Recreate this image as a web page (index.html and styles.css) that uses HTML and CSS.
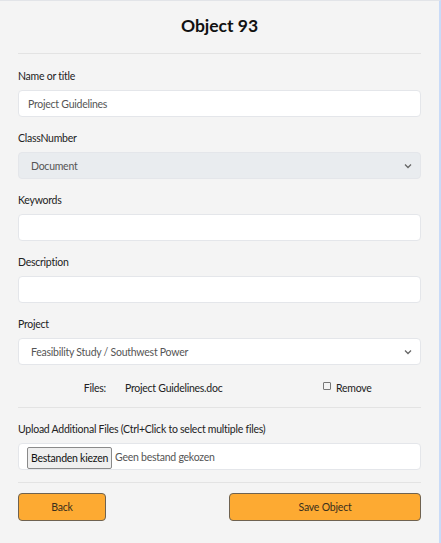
FILE: index.html
```html
<!DOCTYPE html>
<html>
<head>
<meta charset="utf-8">
<link rel="stylesheet" href="styles.css">
</head>
<body>
<div class="page">
  <h1 class="title">Object 93</h1>
  <hr class="rule">
  <div class="field">
    <label class="label">Name or title</label>
    <div class="control">Project Guidelines</div>
  </div>
  <div class="field">
    <label class="label">ClassNumber</label>
    <div class="control select disabled"><span>Document</span><svg class="chev" width="8" height="6" viewBox="0 0 8 6"><path d="M1 1.5 L4 4.5 L7 1.5" fill="none" stroke="#666" stroke-width="1.3"/></svg></div>
  </div>
  <div class="field">
    <label class="label">Keywords</label>
    <div class="control"></div>
  </div>
  <div class="field">
    <label class="label">Description</label>
    <div class="control"></div>
  </div>
  <div class="field">
    <label class="label">Project</label>
    <div class="control select"><span>Feasibility Study / Southwest Power</span><svg class="chev" width="8" height="6" viewBox="0 0 8 6"><path d="M1 1.5 L4 4.5 L7 1.5" fill="none" stroke="#666" stroke-width="1.3"/></svg></div>
  </div>
  <div class="files">
    <span class="files-label">Files:</span>
    <span class="files-name">Project Guidelines.doc</span>
    <span class="files-remove"><span class="check"></span>Remove</span>
  </div>
  <hr class="rule rule-files">
  <div class="field">
    <label class="label">Upload Additional Files (Ctrl+Click to select multiple files)</label>
    <div class="control file"><span class="file-btn">Bestanden kiezen</span><span class="file-none">Geen bestand gekozen</span></div>
  </div>
  <hr class="rule rule-last">
  <div class="actions">
    <button class="btn btn-back">Back</button>
    <button class="btn btn-save">Save Object</button>
  </div>
</div>
</body>
</html>
```

FILE: styles.css
```css
html, body {
  margin: 0;
  padding: 0;
}
body {
  width: 441px;
  height: 543px;
  box-sizing: border-box;
  background: #f4f4f4;
  border-top: 1px solid #e2e4e8;
  border-right: 2px solid #c9dbf8;
  font-family: "Lato", "Noto Sans", sans-serif;
  font-size: 10.5px;
  letter-spacing: -0.25px;
  color: #222;
  overflow: hidden;
}
.page {
  padding: 0 18px 0 18px;
}
.title {
  margin: 11px 0 0 0;
  font-size: 17.5px;
  line-height: 28px;
  font-weight: 700;
  letter-spacing: 0;
  text-align: center;
  color: #111;
}
.rule {
  border: 0;
  border-top: 1px solid #e3e3e3;
  margin: 13px 0 13px 0;
}
.field {
  margin-bottom: 12px;
}
.label {
  display: block;
  line-height: 18px;
  margin-bottom: 5px;
  color: #222;
}
.control {
  height: 27px;
  box-sizing: border-box;
  background: #fff;
  border: 1px solid #e4e6ea;
  border-radius: 4px;
  padding: 0 9px;
  display: flex;
  align-items: center;
  color: #555;
}
.select {
  justify-content: space-between;
  padding: 0 8px 0 12px;
}
.disabled {
  background: #e9ecef;
}
.chev {
  display: block;
}
.files {
  display: grid;
  grid-template-columns: 88px 1fr 100px;
  line-height: 18px;
  margin-top: 14px;
  color: #222;
}
.files-label {
  text-align: right;
}
.files-name {
  padding-left: 19px;
}
.files-remove {
  display: flex;
  align-items: center;
  padding-left: 2px;
}
.check {
  width: 6px;
  height: 6px;
  border: 1px solid #777;
  border-radius: 1px;
  margin-right: 5px;
  margin-top: -4px;
}
.rule-files {
  margin-top: 10px;
  margin-bottom: 12px;
}
.file {
  padding: 0 8px;
  height: 27px;
}
.file-btn {
  background: #efefef;
  border: 1px solid #8a8a8a;
  border-radius: 2px;
  color: #111;
  height: 22px;
  line-height: 20px;
  box-sizing: border-box;
  padding: 0 3px;
  margin-top: 3px;
  align-self: flex-start;
}
.file-none {
  margin-left: 3px;
  color: #555;
}
.rule-last {
  margin-top: 12px;
  margin-bottom: 10px;
}
.actions {
  display: flex;
  justify-content: space-between;
}
.btn {
  height: 28px;
  background: #fdaa32;
  border: 1px solid #6e6251;
  border-radius: 4px;
  font-family: inherit;
  font-size: 10.5px;
  letter-spacing: -0.2px;
  color: #3a2f1c;
  padding: 0;
}
.btn-back {
  width: 88px;
}
.btn-save {
  width: 192px;
}
```
